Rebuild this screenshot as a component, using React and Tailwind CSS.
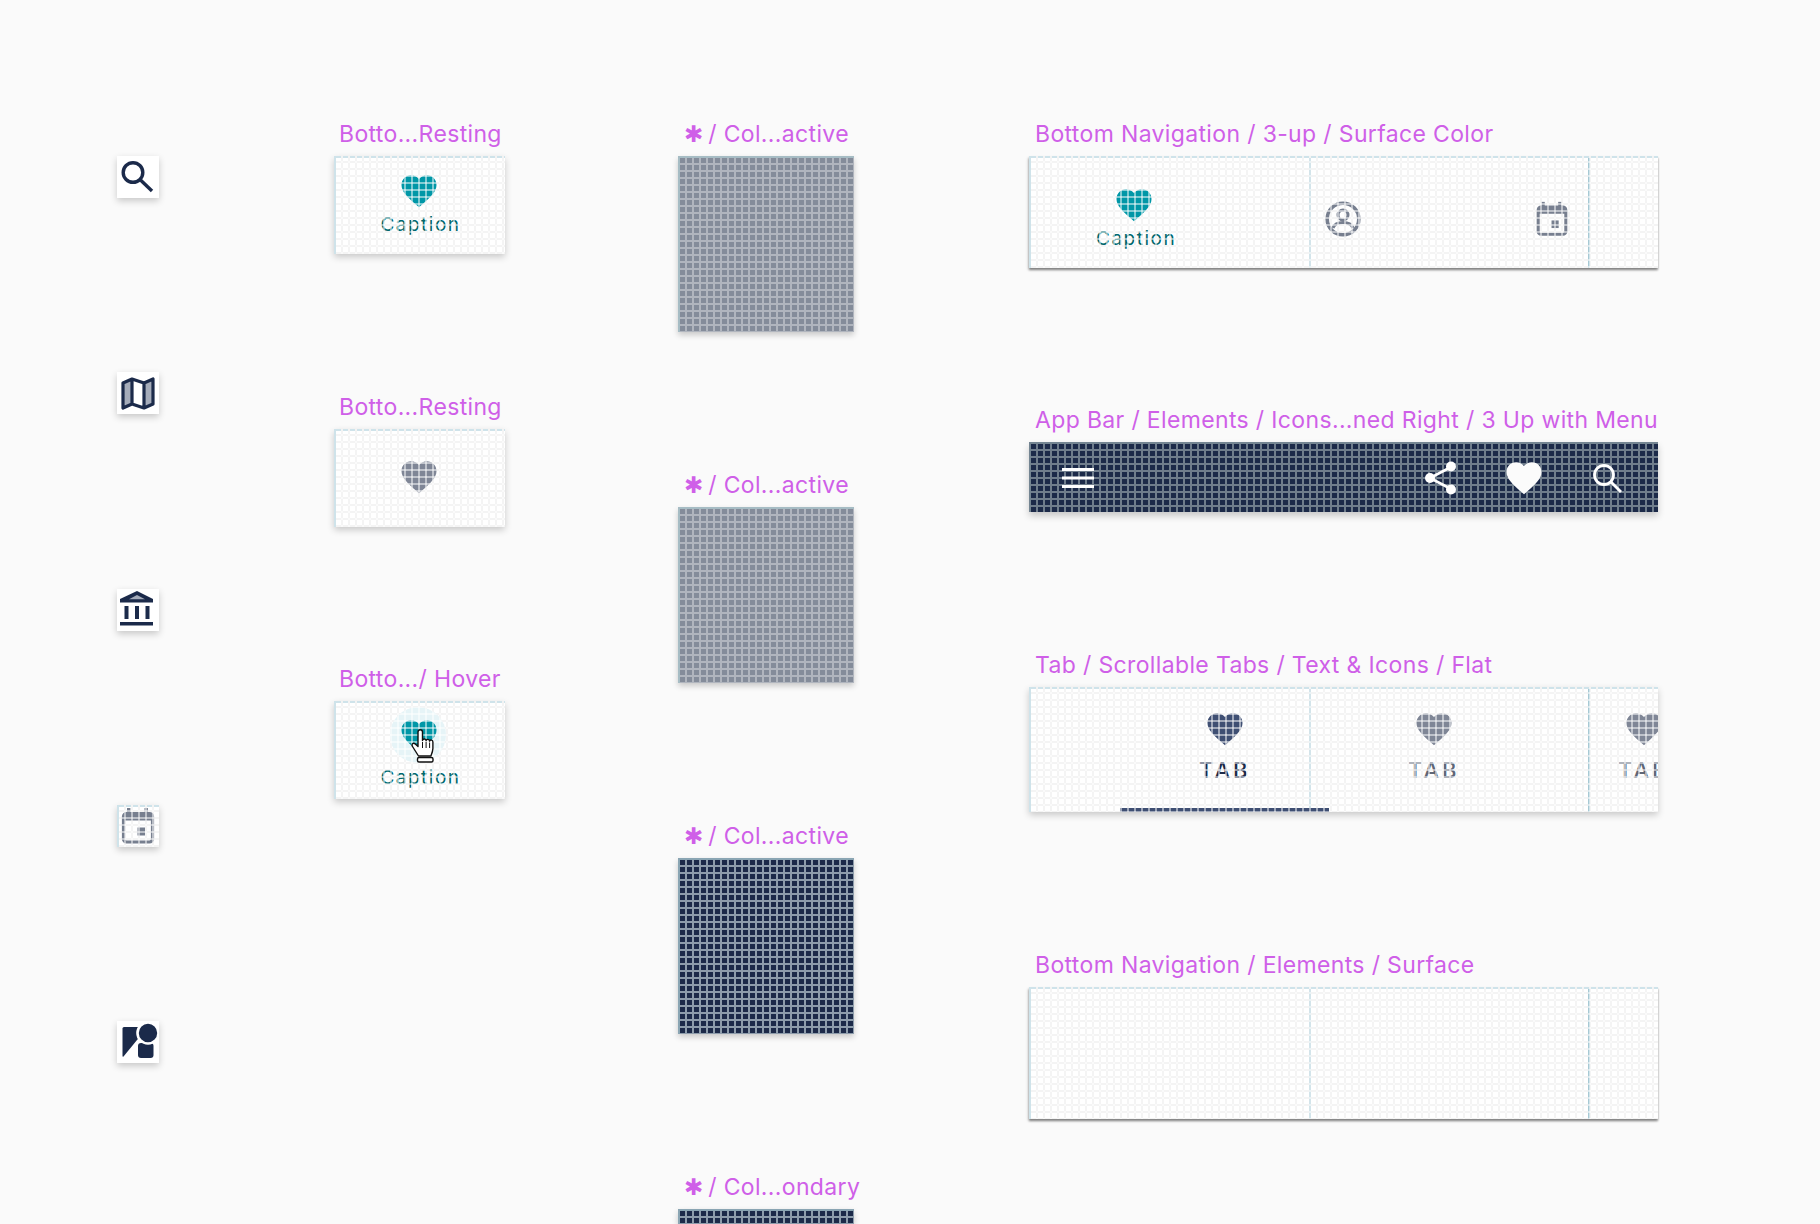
import React from "react";

const HEART = "M12 21.35l-1.45-1.32C5.4 15.36 2 12.28 2 8.5 2 5.42 4.42 3 7.5 3c1.74 0 3.41.81 4.5 2.09C13.09 3.81 14.76 3 16.5 3 19.58 3 22 5.42 22 8.5c0 3.78-3.4 6.86-8.55 11.54L12 21.35z";

function Heart({ color, className = "" }) {
  return (
    <svg viewBox="0 0 24 24" className={`block h-[42px] w-[42px] shrink-0 ${className}`}>
      <path d={HEART} fill={color} />
    </svg>
  );
}

function Title({ children, className = "" }) {
  return (
    <div className={`mb-[5px] h-[34px] whitespace-nowrap text-[23px] leading-[34px] tracking-[0.35px] text-[#cf5fe8] ${className}`}>
      {children}
    </div>
  );
}

function Star() {
  return <span className="-mr-[2px]">✱</span>;
}

function LightFrame({ className = "", shadow = "shadow-[0_3px_7px_rgba(0,0,0,0.2)]", children }) {
  return (
    <div className={`relative overflow-hidden border-l-2 border-[#cfe3ea] bg-white bg-[linear-gradient(90deg,transparent_5px,#e8e8e8_5px),linear-gradient(transparent_5px,#e8e8e8_5px)] bg-[size:7px_7px] ${shadow} ${className}`}>
      {children}
      <div className="pointer-events-none absolute inset-0 bg-[linear-gradient(90deg,transparent_5px,rgba(255,255,255,0.5)_5px),linear-gradient(transparent_5px,rgba(255,255,255,0.5)_5px)] bg-[size:7px_7px]" />
      <div className="absolute inset-x-0 top-0 h-[2px] bg-[repeating-linear-gradient(90deg,#cfe3ea_0,#cfe3ea_5px,#f3f3f3_5px,#f3f3f3_7px)]" />
    </div>
  );
}

function Caption() {
  return <div className="h-[24px] whitespace-nowrap text-[19px] leading-[24px] tracking-[1.5px] text-[#00686e]">Caption</div>;
}

function TabLabel({ color }) {
  return <div className={`h-[24px] whitespace-nowrap text-[22px] font-medium leading-[24px] tracking-[3px] ${color}`}>TAB</div>;
}

function IconBox({ className = "", children }) {
  return (
    <div className={`h-[42px] w-[42px] bg-white shadow-[0_3px_7px_rgba(0,0,0,0.2)] ${className}`}>
      {children}
    </div>
  );
}

function CalendarGlyph({ className = "" }) {
  return (
    <svg viewBox="0 0 42 42" className={`block ${className}`}>
      <rect x="6.500" y="8.500" width="29" height="28.500" rx="3" fill="none" stroke="#777f8f" strokeWidth="3.2" />
      <path d="M6 9h30v6.500H6z" fill="#777f8f" />
      <rect x="10" y="3" width="3.4" height="6" fill="#777f8f" />
      <rect x="27.500" y="3" width="3.4" height="6" fill="#777f8f" />
      <rect x="20.500" y="22.500" width="7.500" height="8" fill="#777f8f" />
    </svg>
  );
}

function GraySquare() {
  return (
    <div className="h-[176px] w-[176px] border-l-2 border-t-2 border-[#a6bcc4] bg-[#848c9a] bg-[linear-gradient(90deg,transparent_5px,#b0b5be_5px),linear-gradient(transparent_5px,#b0b5be_5px)] bg-[size:7px_7px] shadow-[0_3px_6px_rgba(0,0,0,0.2)]" />
  );
}

function NavySquare({ className = "h-[176px]" }) {
  return (
    <div className={`w-[176px] border-l-2 border-t-2 border-[#8aa5b3] bg-[#1c2a49] bg-[linear-gradient(90deg,transparent_5px,#8d9cab_5px),linear-gradient(transparent_5px,#8d9cab_5px)] bg-[size:7px_7px] shadow-[0_3px_6px_rgba(0,0,0,0.2)] ${className}`} />
  );
}

function Cell({ className = "", children }) {
  return <div className={`h-full shrink-0 border-r-2 border-[#a6c9d4] ${className}`}>{children}</div>;
}

const strongShadow = "shadow-[0_2px_2px_rgba(0,0,0,0.4),-1px_2px_3px_rgba(0,0,0,0.15)]";

export default function App() {
  return (
    <div className="flex h-[1224px] items-start overflow-hidden bg-[#fafafa] font-['Inter',sans-serif]">
      {/* icon column */}
      <div className="ml-[117px] w-[42px] shrink-0 pt-[156px]">
        <IconBox>
          <svg viewBox="0 0 42 42" className="block">
            <circle cx="16" cy="16.500" r="9.8" fill="none" stroke="#1b2a4a" strokeWidth="3.4" />
            <path d="M23.500 24l11.500 11" fill="none" stroke="#1b2a4a" strokeWidth="3.4" />
          </svg>
        </IconBox>
        <IconBox className="mt-[174px]">
          <svg viewBox="0 0 42 42" className="block">
            <path d="M6 11l9-4v25l-9 4zM27 11l9-4v25l-9 4z" fill="#a5acba" />
            <path d="M6 11l9-4 12 4 9-4v25l-9 4-12-4-9 4zM15 7v25M27 11v25" fill="none" stroke="#1b2a4a" strokeWidth="3.2" strokeLinejoin="round" />
          </svg>
        </IconBox>
        <IconBox className="mt-[175px]">
          <svg viewBox="0 0 42 42" className="block">
            <path d="M20 2L3 10v3.500h33V10z" fill="#1b2a4a" />
            <path d="M20 6l-8 4.200h16z" fill="#a5acba" />
            <path d="M7.500 17h4v13h-4zM18 17h4v13h-4zM28.500 17h4v13h-4zM3 33h33v3.500H3z" fill="#1b2a4a" />
          </svg>
        </IconBox>
        <LightFrame className="mt-[174px] h-[42px] w-[42px]">
          <CalendarGlyph className="-ml-[2px] w-[42px]" />
        </LightFrame>
        <IconBox className="mt-[174px]">
          <svg viewBox="0 0 42 42" className="block">
            <path d="M5.500 7.500a1.500 1.500 0 0 1 1.500-1.500h15.500v10L6.500 35.500c-.5.5-1 .2-1-.5z" fill="#1b2a4a" />
            <rect x="21" y="22" width="15.500" height="15" rx="3" fill="#1b2a4a" />
            <circle cx="31" cy="12" r="10.500" fill="#1b2a4a" stroke="#fff" strokeWidth="2.6" />
          </svg>
        </IconBox>
      </div>

      {/* states column */}
      <div className="ml-[175px] w-[171px] shrink-0 pt-[117px]">
        <Title className="pl-[5px]">Botto...Resting</Title>
        <LightFrame className="h-[98px]">
          <div className="mx-auto flex w-fit flex-col items-center pt-[14px]">
            <Heart color="#0097a7" className="mr-[3px]" />
            <div className="mt-[1px]"><Caption /></div>
          </div>
        </LightFrame>

        <div className="mt-[136px]">
          <Title className="pl-[5px]">Botto...Resting</Title>
          <LightFrame className="h-[98px] pl-[62px] pt-[27px]">
            <Heart color="#7f8696" />
          </LightFrame>
        </div>

        <div className="mt-[135px]">
          <Title className="pl-[5px]">Botto.../ Hover</Title>
          <LightFrame className="h-[98px]">
            <div className="absolute left-[54px] top-[6px] h-[56px] w-[56px] rounded-full bg-[#e6f4f7]" />
            <div className="relative mx-auto flex w-fit flex-col items-center pt-[14px]">
              <Heart color="#0097a7" className="mr-[3px]" />
              <div className="mt-[9px]"><Caption /></div>
            </div>
            <svg viewBox="0 0 24 35" className="absolute left-[74px] top-[27px] z-10 h-[35px] w-[24px]">
              <path d="M8.500 28L2.500 18.500c-1.600-2.400.8-4.200 2.800-2.400L8 18.500V4c0-3 4.500-3 4.500 0v8.500c.3-2 3.600-2 3.600.2.3-1.900 3.400-1.800 3.500.4.4-1.600 3.300-1.300 3.300.8v6.600c0 2.400-1 5-2 7.500H8.500z" fill="#fff" stroke="#111" strokeWidth="1.4" strokeLinejoin="round" />
              <path d="M12.500 14v6M16.100 14v6M19.600 14.500v5.500" stroke="#111" strokeWidth="1" />
              <rect x="7.500" y="29.500" width="15.500" height="4.500" rx="1.500" fill="#fff" stroke="#111" strokeWidth="1.4" />
            </svg>
          </LightFrame>
        </div>
      </div>

      {/* colour squares column */}
      <div className="ml-[173px] w-[176px] shrink-0 pt-[117px]">
        <Title className="pl-[6px]"><Star /> / Col...active</Title>
        <GraySquare />
        <div className="mt-[136px]">
          <Title className="pl-[6px]"><Star /> / Col...active</Title>
          <GraySquare />
        </div>
        <div className="mt-[136px]">
          <Title className="pl-[6px]"><Star /> / Col...active</Title>
          <NavySquare />
        </div>
        <div className="mt-[136px]">
          <Title className="pl-[6px]"><Star /> / Col...ondary</Title>
          <NavySquare className="h-[15px]" />
        </div>
      </div>

      {/* components column */}
      <div className="ml-[175px] w-[629px] shrink-0 pt-[117px]">
        <Title className="pl-[6px]">Bottom Navigation / 3-up / Surface Color</Title>
        <LightFrame className="h-[112px]" shadow={strongShadow}>
          <div className="flex h-full">
            <Cell className="w-[280px] pl-[65px] pt-[28px]">
              <div className="flex w-fit flex-col items-center">
                <Heart color="#0097a7" className="mr-[5px]" />
                <div className="mt-[1px]"><Caption /></div>
              </div>
            </Cell>
            <Cell className="flex w-[279px] items-start justify-between pl-[14px] pr-[16px] pt-[45px]">
              <svg viewBox="0 0 36 36" className="block h-[36px] w-[36px]">
                <circle cx="18" cy="18" r="15.8" fill="none" stroke="#777f8f" strokeWidth="3.6" />
                <circle cx="18" cy="14" r="5" fill="none" stroke="#777f8f" strokeWidth="3" />
                <path d="M8 27c1.500-4 5.500-5.500 10-5.500S26.500 23 28 27" fill="none" stroke="#777f8f" strokeWidth="3" />
              </svg>
              <CalendarGlyph className="-mt-[2px] w-[40px]" />
            </Cell>
            <div className="flex-1" />
          </div>
        </LightFrame>

        <div className="mt-[135px]">
          <Title className="pl-[6px]">App Bar / Elements / Icons...ned Right / 3 Up with Menu</Title>
          <div className="flex h-[70px] items-center border-l-2 border-t-2 border-[#748592] bg-[#1c2a49] bg-[linear-gradient(90deg,transparent_5px,#6f7d8c_5px),linear-gradient(transparent_5px,#6f7d8c_5px)] bg-[size:7px_7px] pl-[31px] shadow-[0_4px_7px_rgba(0,0,0,0.2)]">
            <svg viewBox="0 0 32 20" className="block h-[20px] w-[32px]">
              <path d="M0 0h32v3H0zM0 8.500h32v3H0zM0 17h32v3H0z" fill="#fff" />
            </svg>
            <svg viewBox="0 0 31 34" className="ml-[331px] block h-[34px] w-[31px]">
              <path d="M26 6L5 17l21 11" fill="none" stroke="#fff" strokeWidth="2.6" />
              <circle cx="26" cy="5.500" r="5" fill="#fff" />
              <circle cx="5" cy="17" r="5" fill="#fff" />
              <circle cx="26" cy="28.500" r="5" fill="#fff" />
            </svg>
            <Heart color="#fbfbfb" className="ml-[47px]" />
            <svg viewBox="0 0 31 30" className="ml-[47px] block h-[30px] w-[31px]">
              <circle cx="12" cy="12" r="9.500" fill="none" stroke="#fff" strokeWidth="2.8" />
              <path d="M19 19l10 10" fill="none" stroke="#fff" strokeWidth="2.8" />
            </svg>
          </div>
        </div>

        <div className="mt-[136px]">
          <Title className="pl-[6px]">Tab / Scrollable Tabs / Text &amp; Icons / Flat</Title>
          <LightFrame className="h-[125px]">
            <div className="flex h-full">
              <Cell className="w-[280px] pl-[168px] pt-[21px]">
                <div className="flex w-fit flex-col items-center">
                  <Heart color="#3f4f73" />
                  <div className="mt-[8px]"><TabLabel color="text-[#1c2a49]" /></div>
                </div>
              </Cell>
              <Cell className="w-[279px] pl-[97px] pt-[21px]">
                <div className="flex w-fit flex-col items-center">
                  <Heart color="#7f8696" />
                  <div className="mt-[8px]"><TabLabel color="text-[#5f6676]" /></div>
                </div>
              </Cell>
              <div className="flex-1 pl-[28px] pt-[21px]">
                <div className="flex w-fit flex-col items-center">
                  <Heart color="#7f8696" />
                  <div className="mt-[8px]"><TabLabel color="text-[#5f6676]" /></div>
                </div>
              </div>
            </div>
            <div className="absolute bottom-0 left-[89px] h-[4px] w-[209px] bg-[#3f4f73]" />
          </LightFrame>
        </div>

        <div className="mt-[136px]">
          <Title className="pl-[6px]">Bottom Navigation / Elements / Surface</Title>
          <LightFrame className="h-[132px]" shadow={strongShadow}>
            <div className="flex h-full">
              <Cell className="w-[280px]" />
              <Cell className="w-[279px]" />
              <div className="flex-1" />
            </div>
          </LightFrame>
        </div>
      </div>
    </div>
  );
}
